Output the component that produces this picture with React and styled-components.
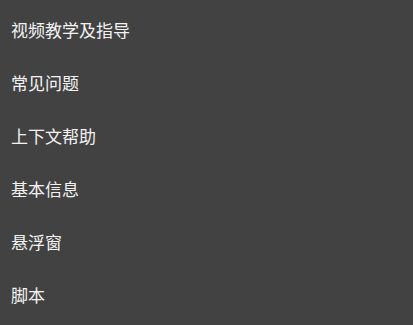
import React from "react";
import styled, { createGlobalStyle } from "styled-components";

const GlobalStyle = createGlobalStyle`
  html, body {
    margin: 0;
    padding: 0;
    background-color: #424242;
  }
`;

const Menu = styled.ul`
  list-style: none;
  margin: 0;
  padding: 3px 0 0;
  width: 413px;
  height: 325px;
  box-sizing: border-box;
  background-color: #424242;
  overflow: hidden;
`;

const MenuItem = styled.li`
  display: flex;
  align-items: center;
  height: 53px;
  padding-left: 11px;
  color: #f2f2f2;
  font-family: "Noto Sans CJK SC", "Noto Sans", sans-serif;
  font-size: 17px;
  cursor: pointer;
`;

const items = ["视频教学及指导", "常见问题", "上下文帮助", "基本信息", "悬浮窗", "脚本"];

export default function App() {
  return (
    <>
      <GlobalStyle />
      <Menu>
        {items.map(label => (
          <MenuItem key={label}>{label}</MenuItem>
        ))}
      </Menu>
    </>
  );
}
